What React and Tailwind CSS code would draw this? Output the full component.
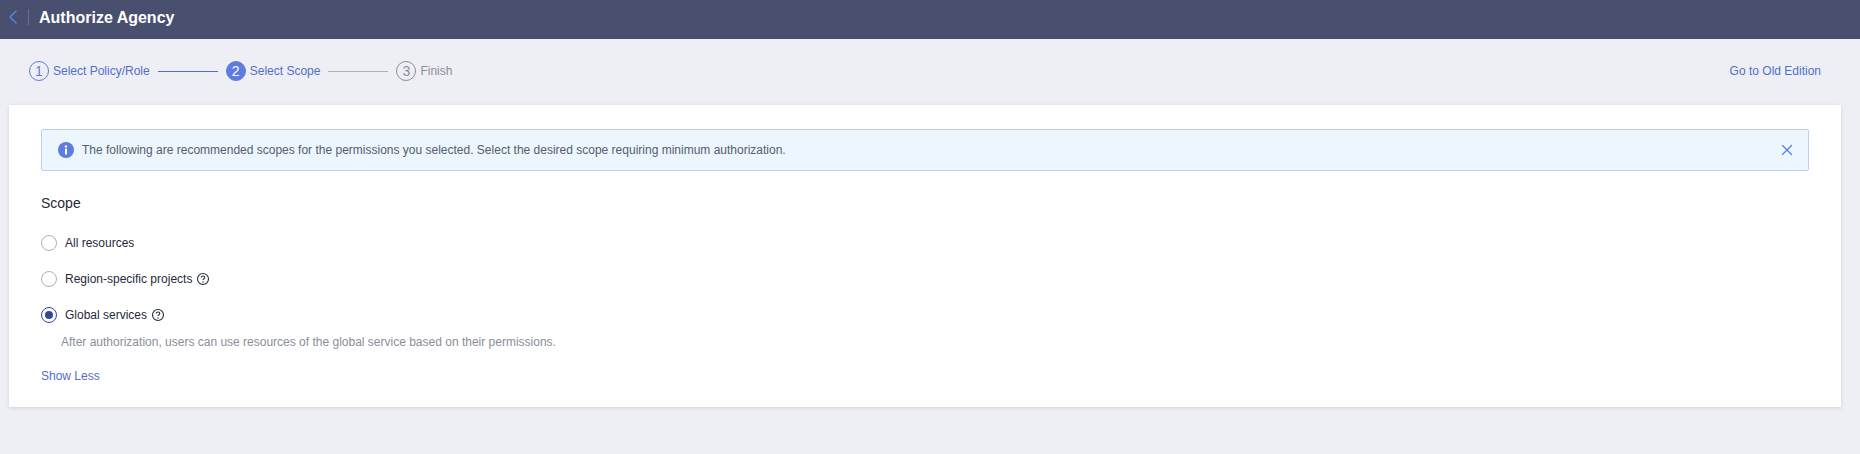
import { X, ChevronLeft } from "lucide-react";

const HelpIcon = () => (
  <svg width="14" height="14" viewBox="0 0 14 14" fill="none" className="ml-[4px] shrink-0">
    <circle cx="7" cy="7" r="5.5" stroke="#252b3a" strokeWidth="1.1" />
    <path d="M5.2 5.6c0-1 .8-1.6 1.8-1.6s1.8.6 1.8 1.5c0 1.2-1.8 1.3-1.8 2.6" stroke="#252b3a" strokeWidth="1.1" />
    <circle cx="7" cy="10" r=".7" fill="#252b3a" />
  </svg>
);

const InfoIcon = () => (
  <svg width="16" height="16" viewBox="0 0 16 16" className="shrink-0">
    <circle cx="8" cy="8" r="8" fill="#5e7ce0" />
    <circle cx="8" cy="4.4" r="1.2" fill="#fff" />
    <rect x="7" y="6.6" width="2" height="6" rx=".4" fill="#fff" />
  </svg>
);

const Step = ({ num, label, state }) => (
  <div className="flex items-center">
    <span
      className={`w-5 h-5 rounded-full border flex items-center justify-center text-sm leading-none ${
        state === "active"
          ? "bg-[#5e7ce0] border-[#5e7ce0] text-white"
          : state === "done"
          ? "border-[#5e7ce0] text-[#5e7ce0]"
          : "border-[#8a8e99] text-[#8a8e99]"
      }`}
    >
      {num}
    </span>
    <span className={`ml-[4px] text-xs ${state === "todo" ? "text-[#8a8e99]" : "text-[#526ecc]"}`}>{label}</span>
  </div>
);

const Radio = ({ label, checked, help }) => (
  <div className="flex items-center h-4 text-xs text-[#252b3a]">
    <span
      className={`w-4 h-4 rounded-full border flex items-center justify-center shrink-0 ${
        checked ? "border-[#344899]" : "border-[#adb0b8]"
      }`}
    >
      {checked && <span className="w-2 h-2 rounded-full bg-[#344899]" />}
    </span>
    <span className="ml-[8px]">{label}</span>
    {help && <HelpIcon />}
  </div>
);

export default function App() {
  return (
    <div className="h-[454px] bg-[#eeeff4] overflow-hidden font-['Liberation_Sans',Arial,sans-serif]">
      {/* header */}
      <div className="h-[39px] bg-[#494f6f] flex items-center pb-[5px]">
        <ChevronLeft size={24} strokeWidth={1.5} className="ml-[1px] text-[#5e7ce0]" />
        <span className="ml-[3px] w-px h-[16px] bg-[#6a6f8c]" />
        <span className="ml-[10px] mt-[2px] text-base font-bold text-white">Authorize Agency</span>
      </div>

      {/* steps */}
      <div className="h-[66px] pl-[29px] pr-[39px] pb-[2px] flex items-center justify-between">
        <div className="flex items-center">
          <Step num="1" label="Select Policy/Role" state="done" />
          <span className="mx-[8px] w-[60px] h-px bg-[#526ecc]" />
          <Step num="2" label="Select Scope" state="active" />
          <span className="mx-[8px] w-[60px] h-px bg-[#adb0b8]" />
          <Step num="3" label="Finish" state="todo" />
        </div>
        <a className="text-xs text-[#526ecc]">Go to Old Edition</a>
      </div>

      {/* card */}
      <div className="ml-[9px] mr-[19px] h-[302px] bg-white shadow-[0_1px_4px_rgba(0,0,0,0.12)] px-[32px] pt-[24px]">
        <div className="h-[42px] bg-[#ebf6ff] border border-[#beccfa] rounded-[2px] flex items-center pl-[16px] pr-[12px] text-xs text-[#575d6c]">
          <InfoIcon />
          <span className="ml-[8px] flex-1">
            The following are recommended scopes for the permissions you selected. Select the desired scope requiring minimum authorization.
          </span>
          <X size={18} strokeWidth={1.6} className="text-[#5e7ce0]" />
        </div>

        <div className="mt-[22px] text-sm leading-[20px] text-[#252b3a]">Scope</div>

        <div className="mt-[22px] flex flex-col gap-[20px]">
          <Radio label="All resources" />
          <Radio label="Region-specific projects" help />
          <Radio label="Global services" checked help />
        </div>
        <div className="mt-[11px] ml-[20px] text-xs leading-[16px] text-[#8a8e99]">
          After authorization, users can use resources of the global service based on their permissions.
        </div>
        <div className="mt-[18px] text-xs leading-[16px] text-[#526ecc]">Show Less</div>
      </div>
    </div>
  );
}
